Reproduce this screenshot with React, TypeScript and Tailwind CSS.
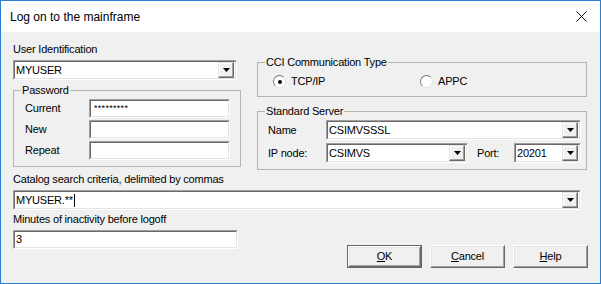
import type { ReactNode } from "react";

const FONT = { fontFamily: '"Liberation Sans", Arial, sans-serif' };

// Sunken 3D edit field
function Field({ className = "", children }: { className?: string; children?: ReactNode }) {
	return (
		<div
			className={`flex border border-t-[#a0a0a0] border-l-[#a0a0a0] border-b-white border-r-white ${className}`}
		>
			<div className="flex min-w-0 flex-1 items-center border border-t-[#696969] border-l-[#696969] border-b-[#e3e3e3] border-r-[#e3e3e3] bg-white">
				{children}
			</div>
		</div>
	);
}

function DropArrow() {
	return (
		<div className="my-[1px] mr-[1px] flex h-[16px] w-[16px] items-center justify-center border border-t-[#e3e3e3] border-l-[#e3e3e3] border-b-[#696969] border-r-[#696969] bg-[#f0f0f0] shadow-[inset_-1px_-1px_0_#a0a0a0,inset_1px_1px_0_white]">
			<svg width="7" height="4" viewBox="0 0 7 4">
				<path d="M0 0h7L3.5 4z" fill="#000" />
			</svg>
		</div>
	);
}

function Combo({ value, className = "" }: { value: string; className?: string }) {
	return (
		<Field className={`h-[20px] ${className}`}>
			<span className="flex-1 pl-[1px] text-[11px] leading-[13px] text-black">{value}</span>
			<DropArrow />
		</Field>
	);
}

// group box; padding goes on the inner div so the legend stays put
function Group({
	title,
	className = "",
	inner = "",
	children,
}: { title: string; className?: string; inner?: string; children: ReactNode }) {
	return (
		<fieldset className={`border border-[#b4b4b4] ${className}`}>
			<legend className="ml-[7px] px-[1px] text-[11px] leading-[13px] text-black">{title}</legend>
			<div className={inner}>{children}</div>
		</fieldset>
	);
}

function Radio({ checked, label, className = "" }: { checked?: boolean; label: string; className?: string }) {
	return (
		<div className={`flex items-center ${className}`}>
			<div className="flex h-[13px] w-[13px] items-center justify-center rounded-full border border-t-[#7a7a7a] border-l-[#7a7a7a] border-b-[#e3e3e3] border-r-[#e3e3e3] bg-white">
				{checked && <div className="h-[4px] w-[4px] rounded-full bg-black" />}
			</div>
			<span className="ml-[5px] text-[11px] leading-[13px] text-black">{label}</span>
		</div>
	);
}

function Button({ label, u, isDefault }: { label: string; u: number; isDefault?: boolean }) {
	const inner = (
		<div className="flex h-full w-full border border-t-white border-l-white border-b-[#696969] border-r-[#696969]">
			<div className="flex flex-1 items-center justify-center border border-t-[#e3e3e3] border-l-[#e3e3e3] border-b-[#a0a0a0] border-r-[#a0a0a0] bg-[#f0f0f0] text-[11px] leading-[13px] text-black">
				{label.slice(0, u)}
				<span className="underline underline-offset-[1px]">{label[u]}</span>
				{label.slice(u + 1)}
			</div>
		</div>
	);
	return (
		<div className={`h-[23px] w-[75px] ${isDefault ? "border border-[#646464]" : ""}`}>{inner}</div>
	);
}

export default function App() {
	return (
		<div
			className="flex h-[284px] w-[601px] flex-col border border-[#2d7fd3] bg-white tracking-[-0.2px]"
			style={FONT}
		>
			{/* title bar */}
			<div className="flex h-[31px] items-center justify-between bg-white pl-[9px] pr-[13px]">
				<span className="text-[12px] tracking-normal text-black">Log on to the mainframe</span>
				<svg width="11" height="11" viewBox="0 0 11 11">
					<path d="M0.5 0.5l10 10M10.5 0.5l-10 10" stroke="#111" strokeWidth="1" />
				</svg>
			</div>

			{/* client */}
			<div className="flex flex-1 flex-col bg-[#f0f0f0] pl-[12px] pr-[12px]">
				<div className="flex items-start">
					{/* left column */}
					<div className="flex w-[228px] flex-col">
						<span className="mt-[11px] text-[11px] leading-[13px] text-black">User Identification</span>
						<Combo value="MYUSER" className="mt-[4px] w-[224px]" />
						<Group title="Password" className="mt-[4px] w-[228px]" inner="pb-[6px] pl-[11px] pr-[10px]">
							<div className="mt-[2px] flex flex-col gap-[2px]">
								<div className="flex items-center">
									<span className="w-[64px] text-[11px] leading-[13px]">Current</span>
									<Field className="h-[19px] w-[141px]">
										<span className="pl-[3px] text-[9px] leading-[9px] tracking-[0.3px]">*********</span>
									</Field>
								</div>
								<div className="flex items-center">
									<span className="w-[64px] text-[11px] leading-[13px]">New</span>
									<Field className="h-[19px] w-[141px]" />
								</div>
								<div className="flex items-center">
									<span className="w-[64px] text-[11px] leading-[13px]">Repeat</span>
									<Field className="h-[19px] w-[141px]" />
								</div>
							</div>
						</Group>
					</div>

					{/* right column */}
					<div className="ml-[16px] flex w-[330px] flex-col">
						<Group title="CCI Communication Type" className="mt-[24px]" inner="pb-[8px] pl-[15px]">
							<div className="mt-[6px] flex">
								<Radio checked label="TCP/IP" className="w-[147px]" />
								<Radio label="APPC" />
							</div>
						</Group>
						<Group title="Standard Server" className="mt-[8px]" inner="pb-[6px] pl-[10px] pr-[5px]">
							<div className="mt-[2px] flex flex-col gap-[3px]">
								<div className="flex items-center">
									<span className="w-[58px] text-[11px] leading-[13px]">Name</span>
									<Combo value="CSIMVSSSL" className="flex-1" />
								</div>
								<div className="flex items-center">
									<span className="w-[58px] text-[11px] leading-[13px]">IP node:</span>
									<Combo value="CSIMVS" className="w-[142px]" />
									<span className="ml-[9px] w-[37px] text-[11px] leading-[13px]">Port:</span>
									<Combo value="20201" className="flex-1" />
								</div>
							</div>
						</Group>
					</div>
				</div>

				<span className="mt-[3px] text-[11px] leading-[13px] text-black">
					Catalog search criteria, delimited by commas
				</span>
				<Field className="mt-[4px] h-[20px] w-[568px]">
					<span className="flex flex-1 items-center pl-[1px] text-[11px] leading-[13px]">
						MYUSER.**
						<span className="ml-[1px] inline-block h-[13px] w-[1px] bg-black" />
					</span>
					<DropArrow />
				</Field>

				<div className="flex items-start justify-between">
					<div className="flex flex-col">
						<span className="mt-[3px] text-[11px] leading-[13px] text-black">
							Minutes of inactivity before logoff
						</span>
						<Field className="mt-[4px] h-[19px] w-[225px]">
							<span className="pl-[1px] text-[11px] leading-[13px]">3</span>
						</Field>
					</div>
					<div className="mt-[35px] flex gap-[8px]">
						<Button label="OK" u={0} isDefault />
						<Button label="Cancel" u={0} />
						<Button label="Help" u={0} />
					</div>
				</div>
			</div>
		</div>
	);
}
